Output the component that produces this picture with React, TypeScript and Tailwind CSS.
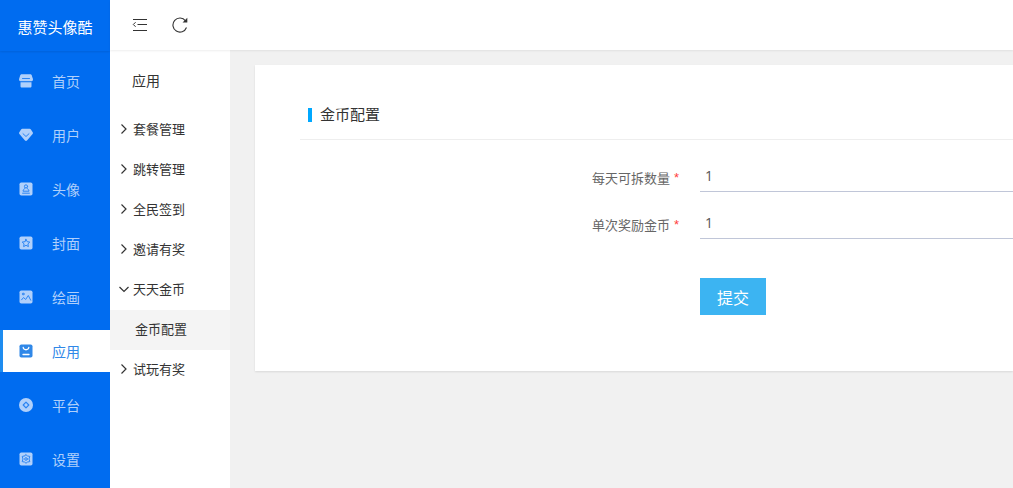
import type { ReactNode } from 'react';

type NavItem = { label: string; icon: ReactNode; active?: boolean };
type MenuItem = { label: string; open?: boolean; child?: string };

const cut = { fill: 'none', stroke: '#2b84f3', strokeWidth: 1, strokeLinecap: 'round', strokeLinejoin: 'round' } as const;
const tile = <rect x="0.5" y="0.5" width="13" height="13" rx="1.8" />;

const nav: NavItem[] = [
  {
    label: '首页',
    icon: (
      <>
        <path d="M3 .3h8c1 0 1.500.4 1.800 1.200L14 5.200c0 1.200-.6 2-1.300 2H1.300C.6 7.200 0 6.400 0 5.200l1.200-3.700C1.500.7 2 .3 3 .3Z" />
        <path d="M1.500 8.200h11v4c0 .9-.5 1.400-1.400 1.400H2.900c-.9 0-1.400-.5-1.400-1.400Z" />
        <path d="M3.500 4.500h7" {...cut} />
      </>
    ),
  },
  {
    label: '用户',
    icon: (
      <>
        <path d="M3.300.8h7.400c.5 0 .9.200 1.200.6l1.800 2.800c.4.6.3 1.200-.1 1.700L8 12.600c-.6.6-1.400.6-2 0L.4 5.900C0 5.400-.1 4.800.3 4.200l1.800-2.800c.3-.4.7-.6 1.200-.6Z" />
        <path d="m4 5.700 3 2.800 3-2.800" {...cut} />
      </>
    ),
  },
  {
    label: '头像',
    icon: (
      <>
        {tile}
        <circle cx="7" cy="4.400" r="1.600" {...cut} />
        <path d="M5.900 6c0 1.200-1.900 1.300-1.900 3.200h6C10 7.300 8.100 7.200 8.100 6M3.600 11.200h6.800" {...cut} />
      </>
    ),
  },
  {
    label: '封面',
    icon: (
      <>
        {tile}
        <path d="m7 3.300 1.200 2.400 2.600.4-1.900 1.800.5 2.700L7 9.300l-2.400 1.300.5-2.700-1.900-1.800 2.600-.4Z" {...cut} />
      </>
    ),
  },
  {
    label: '绘画',
    icon: (
      <>
        {tile}
        <circle cx="4.200" cy="4" r=".9" {...cut} />
        <path d="m2.600 9.800 2-2.300 2 2 2.700-4 2.400 4.700" {...cut} />
      </>
    ),
  },
  {
    label: '应用',
    active: true,
    icon: (
      <>
        {tile}
        <path d="M4.200 3.500c.5 3 5.100 3 5.600 0M4 10.500h6" fill="none" stroke="#fff" strokeWidth="1.300" strokeLinecap="round" />
      </>
    ),
  },
  {
    label: '平台',
    icon: (
      <>
        <circle cx="7" cy="7" r="7" />
        <path d="M7 4.200 9.800 7 7 9.800 4.200 7Z" {...cut} strokeWidth={1.200} />
      </>
    ),
  },
  {
    label: '设置',
    icon: (
      <>
        {tile}
        <path d="M7 2.700 8.300 3.900l2.500.5-.8 2.600.8 2.600-2.500.5L7 11.300l-1.300-1.200-2.500-.5.800-2.600-.8-2.600 2.500-.5Z" {...cut} />
        <circle cx="7" cy="7" r="1.300" {...cut} />
      </>
    ),
  },
];

const menu: MenuItem[] = [
  { label: '套餐管理' },
  { label: '跳转管理' },
  { label: '全民签到' },
  { label: '邀请有奖' },
  { label: '天天金币', open: true, child: '金币配置' },
  { label: '试玩有奖' },
];

const fields = [
  { id: 'daily', label: '每天可拆数量' },
  { id: 'reward', label: '单次奖励金币' },
];

function Chevron({ open }: { open?: boolean }) {
  return (
    <svg viewBox="0 0 10 10" className="size-[10px] shrink-0 fill-none stroke-[#333]" strokeWidth="1.200" aria-hidden="true">
      <path d={open ? 'M.5 3 5 7.500 9.500 3' : 'M2.500.5 7 5 2.500 9.500'} />
    </svg>
  );
}

export default function App() {
  return (
    <div className="flex min-h-screen bg-[#f1f1f1] font-['Noto_Sans_CJK_SC',sans-serif] text-[#333]">
      <aside className="flex w-[110px] shrink-0 flex-col bg-[#006cf0]">
        <h1 className="flex h-[51px] items-center justify-center pt-0.5 text-[15px] leading-5 text-white shadow-[0_1px_2px_rgba(0,0,0,0.1)]">
          惠赞头像酷
        </h1>
        <nav className="flex flex-col gap-3 pt-[9px]">
          {nav.map((item) => (
            <a
              key={item.label}
              href="#"
              aria-current={item.active ? 'page' : undefined}
              className={
                item.active
                  ? 'flex h-[42px] items-center gap-[19px] border-l-3 border-[#1e8cf0] bg-white pl-4 text-sm text-[#3088e8]'
                  : 'flex h-[42px] items-center gap-[19px] border-l-3 border-transparent pl-4 text-sm text-[#b0d0fb]'
              }
            >
              <svg viewBox="0 0 14 14" className="size-[14px] shrink-0 fill-current" aria-hidden="true">
                {item.icon}
              </svg>
              {item.label}
            </a>
          ))}
        </nav>
      </aside>

      <div className="flex min-w-0 flex-1 flex-col">
        <header className="z-10 flex h-[50px] shrink-0 items-center gap-6 bg-white pl-[22px] shadow-[0_1px_2px_rgba(0,0,0,0.07)]">
          <button type="button" aria-label="折叠菜单">
            <svg viewBox="0 0 16 16" className="size-4 fill-none stroke-[#333]" aria-hidden="true">
              <path d="M1 2.500h14M5.500 7.500H15M1 13.500h14M3.600 5.200 1.300 7.500 3.600 9.800" />
            </svg>
          </button>
          <button type="button" aria-label="刷新">
            <svg viewBox="0 0 16 16" className="size-4 fill-none stroke-[#333]" aria-hidden="true">
              <path d="M13.500 3.800A7 7 0 1 0 14.500 10.500" strokeWidth="1.100" />
              <path d="M15.300.8v4.700h-4.700Z" className="fill-[#333] stroke-none" />
            </svg>
          </button>
        </header>

        <div className="flex flex-1">
          <nav className="w-[120px] shrink-0 bg-white">
            <h2 className="flex h-[60px] items-center pl-[22px] text-sm">应用</h2>
            <ul className="text-[13px]">
              {menu.map((item) => (
                <li key={item.label}>
                  <button type="button" aria-expanded={!!item.open} className="flex h-10 w-full items-center gap-1 pb-0.5 pl-[9px]">
                    <Chevron open={item.open} />
                    {item.label}
                  </button>
                  {item.child && (
                    <a href="#" className="flex h-10 items-center bg-[#f4f4f4] pb-0.5 pl-[25px]">
                      {item.child}
                    </a>
                  )}
                </li>
              ))}
            </ul>
          </nav>

          <main className="min-w-0 flex-1 pt-[15px] pl-[25px]">
            <section className="bg-white pt-[25px] pb-14 pl-[45px] shadow-[0_1px_2px_rgba(0,0,0,0.1)]">
              <div className="flex h-[50px] items-center gap-2 border-b border-[#eee] pl-2">
                <span className="h-[14px] w-1 bg-[#00a8ff]" />
                <h3 className="text-[15px]">金币配置</h3>
              </div>
              <form className="grid grid-cols-[379px_minmax(0,1fr)] gap-x-[21px] pt-5">
                {fields.map((field) => (
                  <div key={field.id} className="col-span-2 mb-[15px] grid h-8 grid-cols-subgrid">
                    <label htmlFor={field.id} className="flex items-center justify-end gap-1 pt-1 text-[13px] text-[#666]">
                      {field.label}
                      <span className="font-['Liberation_Sans'] text-[#ff4040]">*</span>
                    </label>
                    <input
                      id={field.id}
                      defaultValue="1"
                      className="h-8 w-full border-b border-[#c0c6d8] px-[5px] font-['Open_Sans','Noto_Sans_CJK_SC',sans-serif] text-sm text-[#555] outline-none"
                    />
                  </div>
                ))}
                <button type="submit" className="col-start-2 mt-6 h-[37px] w-[66px] bg-[#3cb4f2] text-base text-white">
                  提交
                </button>
              </form>
            </section>
          </main>
        </div>
      </div>
    </div>
  );
}
